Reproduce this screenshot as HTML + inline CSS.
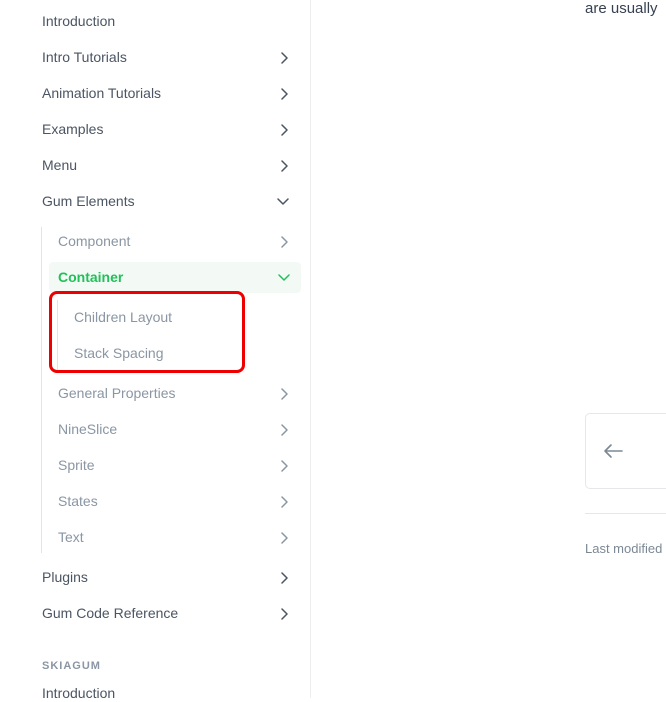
<!DOCTYPE html>
<html><head><style>
body{margin:0;width:666px;height:698px;overflow:hidden;background:#fff;font-family:"Liberation Sans",sans-serif;position:relative}
.side{position:absolute;left:0;top:0;width:310px;height:698px;border-right:1px solid #eceef0}
.it{position:absolute;font-size:14px;color:#4b5563;line-height:18px}
.sub{color:#8a96a3}
.ch{position:absolute;width:12px;height:12px}
.t{position:absolute;font-size:14px;color:#4b5563}
</style></head><body>
<div class="side">
<div class="it" style="left:42px;top:12px">Introduction</div>
<div class="it" style="left:42px;top:48px">Intro Tutorials</div>
<div class="it" style="left:42px;top:84px">Animation Tutorials</div>
<div class="it" style="left:42px;top:120px">Examples</div>
<div class="it" style="left:42px;top:156px">Menu</div>
<div class="it" style="left:42px;top:192px">Gum Elements</div>
<div style="position:absolute;left:41px;top:227px;width:1px;height:326px;background:#e2e5e8"></div>
<div class="it sub" style="left:58px;top:232px">Component</div>
<div style="position:absolute;left:49px;top:262px;width:252px;height:31px;background:#f3faf5;border-radius:4px"></div>
<div class="it" style="left:58px;top:268px;color:#22c05a;font-weight:bold">Container</div>
<div style="position:absolute;left:57px;top:300px;width:1px;height:70px;background:#e2e5e8"></div>
<div class="it sub" style="left:74px;top:308px">Children Layout</div>
<div class="it sub" style="left:74px;top:344px">Stack Spacing</div>
<div style="position:absolute;left:49px;top:291px;width:190px;height:76px;border:3px solid #ee0000;border-radius:8px"></div>
<div class="it sub" style="left:58px;top:384px">General Properties</div>
<div class="it sub" style="left:58px;top:420px">NineSlice</div>
<div class="it sub" style="left:58px;top:456px">Sprite</div>
<div class="it sub" style="left:58px;top:492px">States</div>
<div class="it sub" style="left:58px;top:528px">Text</div>
<div class="it" style="left:42px;top:568px">Plugins</div>
<div class="it" style="left:42px;top:604px">Gum Code Reference</div>
<div class="it" style="left:42px;top:657px;font-size:11px;font-weight:bold;letter-spacing:1px;color:#8a96a3">SKIAGUM</div>
<div class="it" style="left:42px;top:684px">Introduction</div>
<svg width="310" height="698" style="position:absolute;left:0;top:0" fill="none" stroke-width="1.5" stroke-linecap="round" stroke-linejoin="round">
<g stroke="#4b5563">
<path d="M282 53l5 5-5 5M282 89l5 5-5 5M282 125l5 5-5 5M282 161l5 5-5 5M278 199l5 5 5-5M282 573l5 5-5 5M282 609l5 5-5 5"/>
</g>
<g stroke="#8a96a3">
<path d="M282 237l5 5-5 5M282 389l5 5-5 5M282 425l5 5-5 5M282 461l5 5-5 5M282 497l5 5-5 5M282 533l5 5-5 5"/>
</g>
<path d="M279 275l5 5 5-5" stroke="#22c05a"/>
</svg>
</div>
<div class="t" style="left:585px;top:0px;color:#374151;font-size:15px">are usually</div>
<div style="position:absolute;left:585px;top:413px;width:100px;height:74px;border:1px solid #e5e7eb;border-radius:5px"></div>
<svg width="30" height="20" style="position:absolute;left:600px;top:441px" fill="none" stroke="#7b8894" stroke-width="1.6" stroke-linecap="round"><path d="M5 10h17M5 10l6-6M5 10l6 6"/></svg>
<div style="position:absolute;left:585px;top:513px;width:81px;height:1px;background:#e5e7eb"></div>
<div class="t" style="left:585px;top:541px;color:#7b8894;font-size:13px">Last modified</div>
</body></html>
